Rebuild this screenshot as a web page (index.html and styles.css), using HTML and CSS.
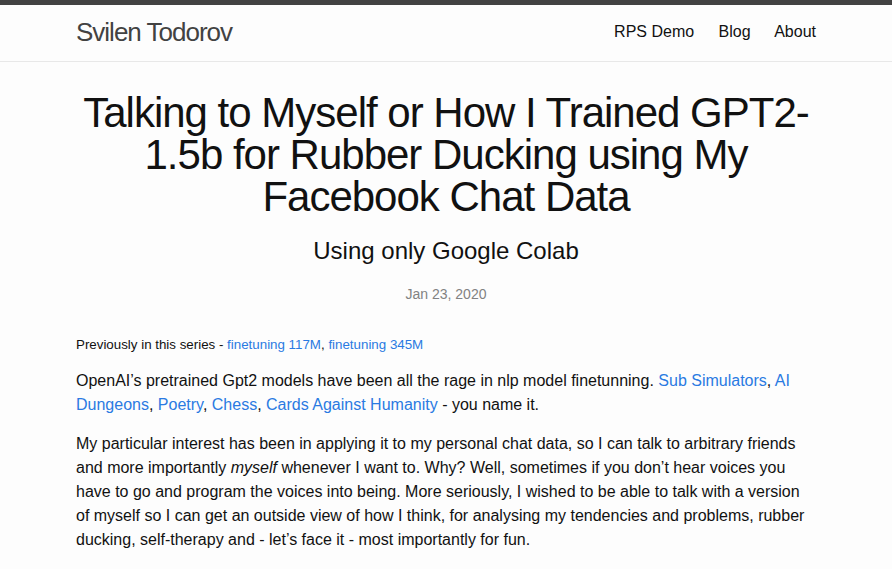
FILE: index.html
```html
<!DOCTYPE html>
<html lang="en">
<head>
<meta charset="utf-8">
<title>Talking to Myself or How I Trained GPT2-1.5b for Rubber Ducking using My Facebook Chat Data</title>
<link rel="stylesheet" href="styles.css">
</head>
<body>
<header class="site-header">
  <div class="wrapper header-inner">
    <a class="site-title" href="#">Svilen Todorov</a>
    <nav class="site-nav">
      <a class="page-link" href="#">RPS Demo</a>
      <a class="page-link" href="#">Blog</a>
      <a class="page-link" href="#">About</a>
    </nav>
  </div>
</header>
<main class="page-content">
  <div class="wrapper">
    <article class="post">
      <header class="post-header">
        <h1 class="post-title">Talking to Myself or How I Trained GPT2-1.5b for Rubber Ducking using My Facebook Chat Data</h1>
        <h2 class="post-subtitle">Using only Google Colab</h2>
        <p class="post-meta">Jan 23, 2020</p>
      </header>
      <div class="post-content">
        <p class="series">Previously in this series - <a href="#">finetuning 117M</a>, <a href="#">finetuning 345M</a></p>
        <p>OpenAI’s pretrained Gpt2 models have been all the rage in nlp model finetunning. <a href="#">Sub Simulators</a>, <a href="#">AI Dungeons</a>, <a href="#">Poetry</a>, <a href="#">Chess</a>, <a href="#">Cards Against Humanity</a> - you name it.</p>
        <p>My particular interest has been in applying it to my personal chat data, so I can talk to arbitrary friends and more importantly <em>myself</em> whenever I want to. Why? Well, sometimes if you don’t hear voices you have to go and program the voices into being. More seriously, I wished to be able to talk with a version of myself so I can get an outside view of how I think, for analysing my tendencies and problems, rubber ducking, self-therapy and - let’s face it - most importantly for fun.</p>
      </div>
    </article>
  </div>
</main>
</body>
</html>
```
FILE: styles.css
```css
html, body {
  margin: 0;
  padding: 0;
}
body {
  font-family: "Liberation Sans", Arial, sans-serif;
  font-size: 16px;
  line-height: 1.5;
  color: #111;
  background: #fdfdfd;
}
a {
  color: #2a7ae2;
  text-decoration: none;
}
.wrapper {
  max-width: 740px;
  margin: 0 auto;
}
.site-header {
  border-top: 5px solid #424242;
  border-bottom: 1px solid #e8e8e8;
  min-height: 56px;
}
.header-inner {
  display: flex;
  justify-content: space-between;
  align-items: center;
}
.site-title {
  font-size: 26px;
  line-height: 54px;
  letter-spacing: -1px;
  color: #424242;
}
.site-nav {
  line-height: 54px;
}
.page-link {
  color: #111;
}
.page-link:not(:last-child) {
  margin-right: 20px;
}
.page-content {
  padding: 30px 0;
}
.post-header {
  text-align: center;
  margin-bottom: 30px;
}
.post-title {
  font-size: 42px;
  font-weight: normal;
  letter-spacing: -1px;
  line-height: 1;
  margin: 0;
}
.post-subtitle {
  font-size: 24px;
  font-weight: normal;
  line-height: 36px;
  margin: 15px 0 0;
}
.post-meta {
  font-size: 14px;
  color: #828282;
  margin: 15px 0 0;
}
.post-content p {
  margin: 0 0 15px;
}
.post-content .series {
  font-size: 13.333px;
  line-height: 19.5px;
  margin-bottom: 14px;
}
```
